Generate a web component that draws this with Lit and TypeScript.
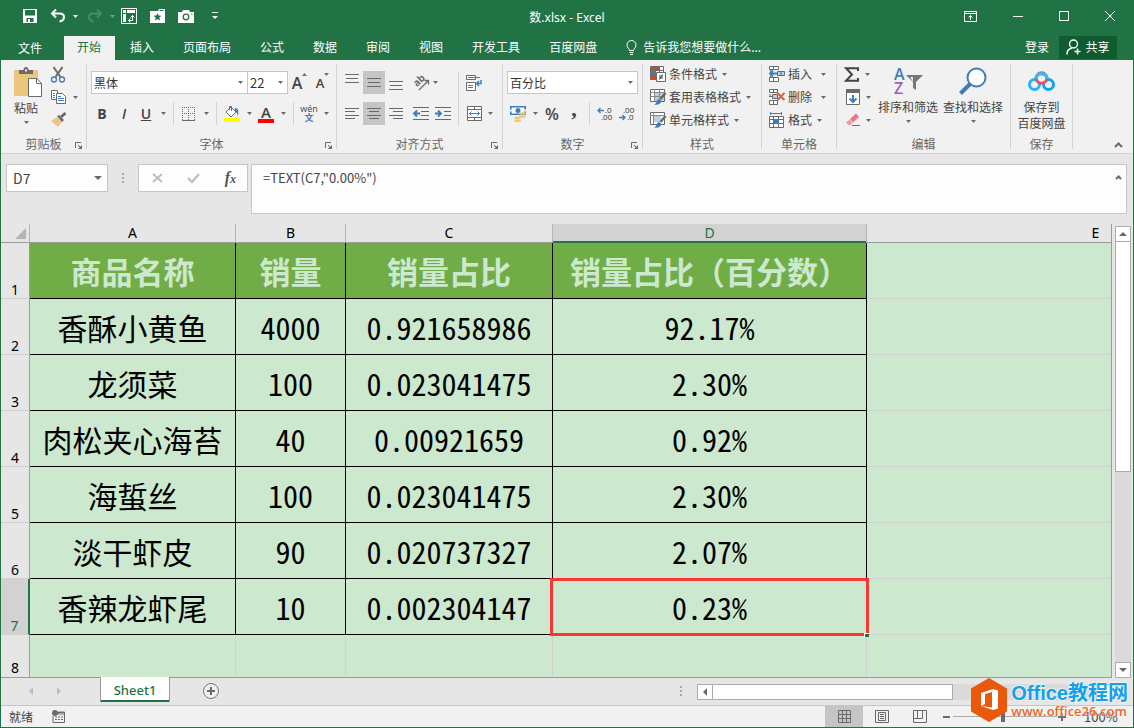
import { LitElement, html, css, svg, nothing } from "lit";
import { customElement, state } from "lit/decorators.js";
import { classMap } from "lit/directives/class-map.js";

const GRAY = "#6a6a6a";
const BLUE = "#3f7cb8";

/* Wraps drawing commands in an svg of the given size */
const icon = (w: number, h: number, body: unknown) =>
  html`<svg width=${w} height=${h} viewBox="0 0 ${w} ${h}" fill="none" aria-hidden="true">${body}</svg>`;

const caret = () => icon(5, 3, svg`<path d="M0 0h5L2.500 3z" fill="#6a6a6a"/>`);
const caretWhite = () => icon(5, 3, svg`<path d="M0 0h5L2.500 3z" fill="#fff"/>`);

const hLines = (lines: number[][]) =>
  svg`${lines.map(([x, y, w]) => svg`<rect x=${x} y=${y} width=${w} height="1" fill=${GRAY}/>`)}`;

const icons = {
  save: icon(14, 14, svg`<path d="M0 0h14v14H0z" fill="#fff"/><path d="M2 1h10v5.500H2zM3.500 9h7v4h-7z" fill="#217346"/><path d="M5 10h2v3H5z" fill="#fff"/>`),
  undo: icon(16, 14, svg`<path d="M2 4.500h7.500c3 0 4.500 1.500 4.500 3.500s-1.500 4-4.500 4.500" stroke="#fff" stroke-width="2"/><path d="M6 .5 2 4.500l4 4" stroke="#fff" stroke-width="2"/>`),
  redo: icon(16, 14, svg`<path d="M14 4.500H6.500c-3 0-4.500 1.500-4.500 3.500s1.500 4 4.500 4.500" stroke="#4f8f6c" stroke-width="2"/><path d="m10 .5 4 4-4 4" stroke="#4f8f6c" stroke-width="2"/>`),
  pivot: icon(16, 16, svg`<path d="M.5.500h15v15H.5z" stroke="#fff"/><path d="M2 2h3v3H2zM6 2h8v3H6zM2 6h3v8H2z" fill="#fff"/><path d="M7.500 12.500h4v-5M9.500 9.500l2-2 2 2M9.500 10.500l-2 2 2 2" stroke="#fff"/>`),
  folder: icon(15, 14, svg`<path d="M0 2h8l1-2h6v14H0z" fill="#fff"/><path d="M9.500 1.500h4" stroke="#217346"/><path d="m7.500 4 1.100 2.600 2.900.2-2.200 1.800.8 2.900-2.600-1.600L5 11.500l.7-2.900-2.200-1.800 2.900-.2z" fill="#217346"/>`),
  camera: icon(16, 13, svg`<path d="M0 2h4l1-2h6l1 2h4v11H0z" fill="#fff"/><circle cx="8" cy="7" r="2.800" stroke="#217346" stroke-width="1.300"/><path d="M13 4h1.500" stroke="#217346"/>`),
  custom: icon(6, 8, svg`<path d="M0 .5h6" stroke="#fff"/><path d="M0 4h6L3 7z" fill="#fff"/>`),
  ribbonOpt: icon(13, 11, svg`<path d="M.5.500h12v10H.5zM.5 2.500h12M6.500 9V4.500M4.500 6.500l2-2 2 2" stroke="#fff"/>`),
  min: icon(10, 10, svg`<path d="M0 5.500h10" stroke="#fff"/>`),
  max: icon(10, 10, svg`<path d="M.5.500h9v9h-9z" stroke="#fff"/>`),
  close: icon(10, 10, svg`<path d="m0 0 10 10M10 0 0 10" stroke="#fff"/>`),
  bulb: icon(11, 15, svg`<path d="M3.500 10.500c0-2-2.500-2.500-2.500-5.500a4.500 4.500 0 0 1 9 0c0 3-2.500 3.500-2.500 5.500zM3.500 12.500h4M4 14.500h3" stroke="#fff"/>`),
  share: icon(16, 16, svg`<circle cx="7.500" cy="5" r="4" stroke="#fff" stroke-width="1.400"/><path d="M1 15.500c0-4 2-6 5-6.300M8.500 12.500h6M11.500 9.500v6" stroke="#fff" stroke-width="1.400"/>`),
  paste: icon(28, 31, svg`<path d="M0 3h24v26H0z" fill="#ecc67f"/><path d="M5 3h4.500c0-4 5-4 5 0H19v4H5z" fill="#6a6a6a"/><path d="M11 2.500h2v2h-2z" fill="#f1f1f1"/><path d="M14.500 11.500h8.500l4.500 5v13h-13z" fill="#fff" stroke="#6a6a6a"/><path d="M22.500 11.500v5h5" stroke="#6a6a6a"/>`),
  cut: icon(14, 16, svg`<path d="m2.500 0 7 10M11.500 0l-7 10" stroke="#6a6a6a" stroke-width="2"/><circle cx="3" cy="12.500" r="2.500" stroke="${BLUE}" stroke-width="1.300"/><circle cx="11" cy="12.500" r="2.500" stroke="${BLUE}" stroke-width="1.300"/>`),
  copy: icon(15, 14, svg`<path d="M.5.500h6v9h-6z" fill="#fff" stroke="#6a6a6a"/><path d="M5.500 3.500h6l3 3v7h-9z" fill="#fff" stroke="#6a6a6a"/><path d="M2 3.500h2M2 5.500h2M2 7.500h2M7 6.500h3M7 8.500h6M7 10.500h6" stroke="${BLUE}"/>`),
  brush: icon(16, 15, svg`<path d="m0 9 6-4 5 5-4 5z" fill="#ecc67f"/><path d="m6 4 2-1 5 5-2 2z" fill="#6a6a6a"/><path d="m10 5 4.500-4" stroke="#6a6a6a" stroke-width="3"/>`),
  launcher: icon(7, 7, svg`<path d="M.5 6V.500H6M3 3l3 3" stroke="#6a6a6a"/><path d="M7 3v4H3z" fill="#6a6a6a"/>`),
  up: icon(5, 3, svg`<path d="M0 3h5L2.500 0z" fill="${BLUE}"/>`),
  down: icon(5, 3, svg`<path d="M0 0h5L2.500 3z" fill="${BLUE}"/>`),
  borders: icon(14, 14, svg`<path d="M0 .5h14M0 6.500h14M.5 0v13M6.500 0v13M12.500 0v13" stroke="#6a6a6a" stroke-dasharray="1 1"/><path d="M0 13.500h13" stroke="#6a6a6a"/>`),
  fill: icon(16, 17, svg`<path d="m2 7 5-5 5 5-5 5z" fill="#fff" stroke="#6a6a6a"/><path d="M5.500 5V1.500h2V6" stroke="#6a6a6a"/><path d="M11 3c3 0 4 3 3 8-1-2-1-4-3-5z" fill="${BLUE}"/><path d="M0 13h16v4H0z" fill="#ff0"/>`),
  threeLines: icon(14, 9, hLines([[0, 0, 14], [1, 4, 12], [0, 8, 14]])),
  left: icon(14, 11, hLines([[0, 0, 14], [0, 3, 10], [0, 7, 14], [0, 10, 10]])),
  center: icon(14, 11, hLines([[0, 0, 14], [2, 3, 10], [0, 7, 14], [2, 10, 10]])),
  right: icon(14, 11, hLines([[0, 0, 14], [4, 3, 10], [0, 7, 14], [4, 10, 10]])),
  orient: icon(16, 16, svg`<text x="0" y="9" transform="rotate(-45 6 6)" font-family="Open Sans" font-weight="700" font-size="10" fill="#6a6a6a">ab</text><path d="m6 15 9-9M11.500 5.500h4v4" stroke="#6a6a6a" stroke-width="1.300"/>`),
  outdent: icon(16, 13, svg`<path d="M0 .5h16M8 4.500h8M8 8.500h8M0 12.500h16" stroke="#6a6a6a"/><path d="M1 6.500h6M4 3.500l-3 3 3 3" stroke="${BLUE}" stroke-width="1.800"/>`),
  indent: icon(16, 13, svg`<path d="M0 .5h16M9 4.500h7M9 8.500h7M0 12.500h16" stroke="#6a6a6a"/><path d="M0 6.500h6M3 3.500l3 3-3 3" stroke="${BLUE}" stroke-width="1.800"/>`),
  wrap: icon(16, 16, svg`<path d="M.5.500h9v4h-9zM.5 7.500h9v8h-9z" fill="#fff" stroke="#6a6a6a"/><path d="M2 2.500h12M2 10.500h5M2 12.500h5" stroke="${BLUE}"/><path d="M15 5v3.500h-4M13 6l-2.500 2.500L13 11" stroke="${BLUE}" stroke-width="1.500"/>`),
  merge: icon(15, 15, svg`<path d="M.5.500h14v14H.5zM.5 3.500h14M.5 11.500h14M7.500.500v3M7.500 11.500v3" fill="#fff" stroke="#6a6a6a"/><path d="M2 7.500h11M4.500 5.500l-2 2 2 2M10.500 5.500l2 2-2 2" stroke="${BLUE}"/>`),
  currency: icon(16, 16, svg`<path d="M.8.800h14.400v7.500H.8z" fill="#fff" stroke="${BLUE}" stroke-width="1.600"/><circle cx="8" cy="4.500" r="2.500" fill="${BLUE}"/><path d="M0 4.500h2M14 4.500h2" stroke="#f1f1f1" stroke-width="2"/><ellipse cx="12.500" cy="7.500" rx="3.500" ry="1.300" fill="#ecc67f"/><ellipse cx="12.500" cy="10.500" rx="3.500" ry="1.300" fill="#ecc67f"/><ellipse cx="7.500" cy="11.800" rx="3.500" ry="1.300" fill="#ecc67f"/><ellipse cx="7.500" cy="14.700" rx="3.500" ry="1.300" fill="#ecc67f"/>`),
  decInc: icon(16, 14, svg`<path d="M1 3.500h6M3.500 1l-2.500 2.500L3.500 6" stroke="${BLUE}" stroke-width="1.300"/><text x="8" y="6" font-family="Open Sans" font-size="8" fill="#333">.0</text><text x="4" y="13" font-family="Open Sans" font-size="8" fill="#333">.00</text>`),
  decDec: icon(16, 14, svg`<path d="M0 10.500h6M3.500 8 6 10.500 3.500 13" stroke="${BLUE}" stroke-width="1.300"/><text x="4" y="6" font-family="Open Sans" font-size="8" fill="#333">.00</text><text x="8" y="13" font-family="Open Sans" font-size="8" fill="#333">.0</text>`),
  cond: icon(16, 16, svg`<path d="M.5.500h13v13H.5zM.5 4.500h13M.5 8.500h13M5.500.500v13M9.500.500v13" fill="#fff" stroke="#6a6a6a"/><path d="M1 1h8v3H1zM1 9h4v4H1z" fill="#d24726"/><path d="M1 5h5v3H1z" fill="${BLUE}"/><path d="M6.500 6.500h9v9h-9z" fill="#fff" stroke="#6a6a6a"/><path d="M9 10h4M9 12h4M12.500 8.500l-3 5" stroke="#444"/>`),
  tableFmt: icon(16, 16, svg`<path d="M.5.500h14v12H.5z" fill="#fff" stroke="#6a6a6a"/><path d="M5 4h9v8H5z" fill="#b9cfe6"/><path d="M.5 3.500h14M.5 7.500h14M4.500.500v12M9.500.500v12" stroke="#8a8a8a"/><path d="m15.500 4-5 6" stroke="#6a6a6a" stroke-width="2.500"/><path d="M4 15.500c3-.5 2-5 5-5.500l2.500 2c-.5 3-4 4.500-7.500 3.500z" fill="${BLUE}"/>`),
  cellStyle: icon(16, 16, svg`<path d="M.5.500h14v12H.5z" fill="#fff" stroke="#6a6a6a"/><path d="M4 4h7v6H4z" fill="#b9cfe6"/><path d="M.5 3.500h14M3.500.500v12" stroke="#8a8a8a"/><path d="m15.500 4-5 6" stroke="#6a6a6a" stroke-width="2.500"/><path d="M4 15.500c3-.5 2-5 5-5.500l2.500 2c-.5 3-4 4.500-7.500 3.500z" fill="${BLUE}"/>`),
  insert: icon(16, 16, svg`<path d="M.5.500h9v3h-9zM.5 11.500h9v4h-9zM4.500.500v3M4.500 11.500v4M1.500 3.500v2M1.500 9.500v2" fill="#fff" stroke="#6a6a6a"/><path d="M8.500 5.500h7v4h-7zM12 5.500v4" fill="#b9cfe6" stroke="#6a6a6a"/><path d="M1 7.500h7M4 4.500l-3 3 3 3" stroke="${BLUE}" stroke-width="1.800"/>`),
  remove: icon(16, 16, svg`<path d="M.5.500h8v3h-8zM.5 11.500h8v4h-8zM4.500.500v3M4.500 11.500v4" fill="#fff" stroke="#6a6a6a"/><path d="M3.500 5.500h5v4h-5z" fill="#b9cfe6" stroke="#6a6a6a"/><path d="M1 5v2M0 7.500h3" stroke="#6a6a6a"/><path d="m8.500 4 7 7M15.500 4l-7 7" stroke="#d9593d" stroke-width="1.800"/>`),
  format: icon(16, 16, svg`<path d="M1 1.500h12M1.500 0v3M12.500 0v3" stroke="${BLUE}"/><path d="M.5 4.500h14v11H.5zM.5 7.500h14M.5 11.500h14M4.500 4.500v11M9.500 4.500v11" fill="#fff" stroke="#6a6a6a"/><path d="M4 7h6v5H4z" fill="${BLUE}"/>`),
  sigma: icon(15, 15, svg`<path d="M14 4V1.200H2L8 7.500 2 13.800h12V11" stroke="#444" stroke-width="2"/>`),
  fillDown: icon(14, 16, svg`<path d="M.5.500h13v15H.5z" fill="#fff" stroke="#6a6a6a"/><path d="M0 0h14v4H0z" fill="#6a6a6a"/><path d="M7 6v7M3.500 9.500 7 13l3.500-3.500" stroke="${BLUE}" stroke-width="2"/>`),
  eraser: icon(14, 14, svg`<path d="m4 6 6-5.500 3 3.500-6 5.500z" fill="#e8788a"/><path d="m3.500 6.500 3.200 3.500-2.500 2H2.500L0 9.500z" fill="#ee9aa7"/><path d="M6 12.500h8" stroke="#6a6a6a"/>`),
  sort: icon(29, 29, svg`<text x="0" y="13" font-family="Open Sans" font-weight="600" font-size="16" fill="${BLUE}">A</text><text x="0" y="27" font-family="Open Sans" font-weight="600" font-size="16" fill="#9a5fc0">Z</text><path d="M12 8h17l-7 7v8l-3-2v-6z" fill="#777"/><path d="M16 10h3v5z" fill="#e8e8e8"/>`),
  find: icon(28, 28, svg`<circle cx="17.500" cy="10.500" r="9" fill="#fff" stroke="${BLUE}" stroke-width="2"/><path d="m11 17-9.500 9.500" stroke="${BLUE}" stroke-width="4"/>`),
  baidu: icon(27, 22, svg`<circle cx="6.500" cy="14.500" r="5" stroke="#25b4f4" stroke-width="3"/><circle cx="20.500" cy="14.500" r="5" stroke="#12a0f5" stroke-width="3"/><circle cx="13.500" cy="8" r="5.300" fill="#f1f1f1" stroke="#f04c62" stroke-width="3"/><path d="M7.700 8.500a5.900 5.900 0 0 1 11.600 0" stroke="#34bdf5" stroke-width="3.400"/>`),
  chevron: icon(9, 6, svg`<path d="m1 5 3.500-3.500L8 5" stroke="#6a6a6a" stroke-width="2"/>`),
  chevronS: icon(7, 5, svg`<path d="m1 4 2.500-2.500L6 4" stroke="#6a6a6a" stroke-width="2"/>`),
  cancel: icon(11, 10, svg`<path d="m1 1 9 8M10 1 1 9" stroke="#bdbdbd" stroke-width="1.800"/>`),
  check: icon(13, 10, svg`<path d="m1 5 4 4 7-8" stroke="#bdbdbd" stroke-width="2.200"/>`),
  dots: icon(2, 11, svg`<path d="M0 0h2v2H0zM0 4h2v2H0zM0 8h2v2H0z" fill="#aaa"/>`),
  plus: icon(16, 16, svg`<circle cx="8" cy="8" r="7.500" fill="#f1f1f1" stroke="#777"/><path d="M8 4v8M4 8h8" stroke="#6a6a6a" stroke-width="2"/>`),
  macro: icon(13, 13, svg`<path d="M1 6v6.500h11.500v-10H7M6.500 2h6v2h-6z" stroke="#6a6a6a"/><circle cx="3" cy="3" r="3" fill="#6a6a6a"/><path d="M3 7h2M6 7h2M9 7h2M3 9.500h2M6 9.500h2M9 9.500h2" stroke="#6a6a6a"/>`),
  viewGrid: icon(13, 13, svg`<path d="M.5.500h12v12H.5zM.5 4.500h12M.5 8.500h12M4.500.500v12M8.500.500v12" stroke="#6a6a6a"/>`),
  viewPage: icon(14, 13, svg`<path d="M.5.500h13v12H.5zM3.500 2.500h7v8h-7zM5 4.500h4M5 6.500h4M5 8.500h4" stroke="#6a6a6a"/>`),
  viewBreak: icon(14, 13, svg`<path d="M.5.500h13v12H.5zM4.500.500v8M9.500.500v8M.5 8.500h9" stroke="#6a6a6a"/>`),
  hex: icon(38, 44, svg`<path d="M19 1 36 11v22L19 43 2 33V11z" fill="#e8590c" stroke="#e8590c" stroke-width="2" stroke-linejoin="round"/><path d="m11 15 12-4 5 1.500v18L23 32l-12-4 11 1.500V14l-7 2v10l-4 2z" fill="#fff"/>`),
};

interface Row { n: number; cells: string[] }

const TABS = ["插入", "页面布局", "公式", "数据", "审阅", "视图", "开发工具", "百度网盘"];
const HEAD = ["商品名称", "销量", "销量占比", "销量占比（百分数）"];
const ROWS: Row[] = [
  { n: 2, cells: ["香酥小黄鱼", "4000", "0.921658986", "92.17%"] },
  { n: 3, cells: ["龙须菜", "100", "0.023041475", "2.30%"] },
  { n: 4, cells: ["肉松夹心海苔", "40", "0.00921659", "0.92%"] },
  { n: 5, cells: ["海蜇丝", "100", "0.023041475", "2.30%"] },
  { n: 6, cells: ["淡干虾皮", "90", "0.020737327", "2.07%"] },
  { n: 7, cells: ["香辣龙虾尾", "10", "0.002304147", "0.23%"] },
];

@customElement("app-root")
export class AppRoot extends LitElement {
  @state() private selectedRow = 7;

  static styles = css`
    :host {
      display: flex;
      flex-direction: column;
      height: 100vh;
      box-sizing: border-box;
      border: solid #217346;
      border-width: 0 1px 1px;
      background: #e6e6e6;
      overflow: hidden;
      position: relative;
      font: 12px/16px "Noto Sans CJK SC", sans-serif;
      color: #444;
    }
    * { box-sizing: border-box; }
    svg { display: block; flex: none; overflow: visible; }
    button, select, input, textarea {
      font: inherit; color: inherit; margin: 0; padding: 0; border: 0; background: none; border-radius: 0;
    }
    button { display: flex; align-items: center; justify-content: center; white-space: nowrap; flex: none; }
    select, input { appearance: none; outline: none; min-width: 0; }

    .title { background: #217346; color: #fff; height: 36px; flex: none; display: grid; grid-template-columns: 1fr auto 1fr; align-items: center; font-family: "Noto Sans", "Noto Sans CJK SC", sans-serif; }
    .quick { display: flex; align-items: center; padding: 0 0 4px 22px; }
    .quick button { height: 16px; }
    .q-save { margin-right: 13px; }
    .q-drop { gap: 7px; margin-right: 9px; }
    .q-redo { margin-right: 6px; opacity: 0.9; }
    .q-mid { margin-right: 13px; }
    .q-cam { margin-right: 18px; }
    .dim { opacity: 0.4; }
    .win { display: flex; justify-content: flex-end; gap: 36px; padding: 0 18px 4px 0; }

    .tabs { background: #217346; color: #fff; height: 24px; flex: none; display: flex; align-items: stretch; }
    .tabs button { padding: 0 14px 2px 15px; }
    .tabs .file { padding: 0 22px 0 17px; }
    .tabs .on { background: #f1f1f1; color: #217346; padding: 0 14px 2px 13px; width: 51px; }
    .tabs .tell { gap: 6px; }
    .tabs .login { margin-left: auto; padding: 0 10px 2px; }
    .tabs .share { background: #0f5c30; gap: 4px; padding: 0 8px 1px 7px; width: 58px; height: 23px; margin-right: 16px; }

    .ribbon { display: flex; height: 94px; flex: none; background: #f1f1f1; border-bottom: 1px solid #d2d2d2; padding-top: 4px; }
    .group { display: flex; flex-direction: column; flex: none; padding-right: 1px; background: linear-gradient(#d4d4d4, #d4d4d4) right top / 1px 85px no-repeat; }
    .body { display: flex; height: 72px; }
    .cap { height: 16px; display: grid; grid-template-columns: 1fr auto 1fr; align-items: center; color: #666; }
    .cap .lau { grid-column: 3; justify-self: end; margin-right: 4px; padding-top: 3px; }
    .cap span { grid-column: 2; }
    .rows { display: flex; flex-direction: column; gap: 8px; padding-top: 7px; }
    .line { display: flex; align-items: center; height: 23px; }
    .sep { width: 1px; height: 23px; background: #d4d4d4; flex: none; margin: 0 4px; }
    .sep.tall { height: 55px; margin: 7px 0 0 7px; }
    .big { flex-direction: column; justify-content: flex-start; }
    .big .pic { height: 32px; display: flex; align-items: center; margin-bottom: 4px; }
    .big .lbl { height: 16px; margin-bottom: 5px; }
    .g-clip { width: 86px; }
    .g-clip .body { padding: 3px 0 0 13px; }
    .g-clip .big .pic { height: 31px; margin-bottom: 2px; }
    .g-clip .big { width: 28px; align-items: flex-start; }
    .g-clip .big .arr { margin-left: 10px; }
    .small { display: flex; flex-direction: column; gap: 6px; padding-left: 9px; }
    .small button { height: 16px; gap: 7px; justify-content: flex-start; }
    .g-font { width: 250px; }
    .g-font .rows { padding-left: 4px; }
    .combo { display: grid; height: 23px; background: #fff; border: 1px solid #c6c6c6; flex: none; }
    .combo > * { grid-area: 1 / 1; }
    .combo select { padding-left: 2px; width: 100%; font-size: 12px; color: #333; }
    .combo svg { justify-self: end; align-self: center; margin-right: 4px; pointer-events: none; }
    .w-font { width: 157px; }
    .w-size { width: 41px; margin-left: -1px; }
    .w-size select { font-size: 13px; }
    .w-num { width: 131px; }
    .grow { width: 23px; align-items: flex-start; font: 600 16px/20px "Open Sans", sans-serif; }
    .grow.s { font-size: 13px; }
    .b22 { width: 22px; height: 23px; }
    .b16 { width: 16px; height: 23px; }
    .b12 { width: 12px; height: 23px; }
    .lead { padding-left: 6px; }
    .bold { font: 700 14px/20px "Open Sans", sans-serif; }
    .ital { font: italic 600 14px/20px "Open Sans", sans-serif; }
    .und { font: 600 14px/20px "Open Sans", sans-serif; text-decoration: underline; }
    .color-a { flex-direction: column; font: 600 15px/14px "Open Sans", sans-serif; }
    .bar { width: 16px; height: 4px; background: red; }
    .wen { flex-direction: column; font: 9px/8px "Open Sans", sans-serif; }
    .wen b { color: #3f7cb8; font: 700 9px/10px "Noto Sans CJK SC", sans-serif; }
    .sel { background: #c5c5c5; }
    .g-align { width: 166px; }
    .g-align .rows { padding-left: 4px; }
    .g-align .first { align-items: flex-start; padding-top: 3px; }
    .g-align .last { align-items: flex-end; padding-bottom: 4px; }
    .g-align .side { padding-left: 7px; }
    .side .line { gap: 6px; }
    .g-num { width: 140px; }
    .g-num .rows { padding-left: 4px; }
    .pct { font: 600 16px/20px "Open Sans", sans-serif; }
    .comma { font: 700 22px/12px "Liberation Serif", serif; padding-bottom: 10px; }
    .g-style { width: 119px; }
    .list { display: flex; flex-direction: column; gap: 7px; padding: 2px 0 0 7px; }
    .list button { height: 16px; gap: 5px; justify-content: flex-start; }
    .list svg:first-child { margin-right: -2px; }
    .g-cell { width: 75px; }
    .list .wide { gap: 9px; }
    .list .wide svg:first-child { margin-right: -6px; }
    .g-edit { width: 174px; }
    .g-edit .list { width: 41px; }
    .g-edit .list button { gap: 8px; }
    .g-edit .list button + button { padding-left: 2px; }
    .g-edit .big { width: 60px; margin-right: 5px; }
    .g-edit .big .pic, .g-save .pic { margin-top: 2px; height: 30px; margin-bottom: 3px; }
    .g-save { width: 62px; }
    .g-save .big { width: 61px; }
    .g-save .lbl { margin: 0; }
    .collapse { margin: auto 10px 2px auto; height: 12px; }

    .fx { display: flex; align-items: flex-start; padding: 10px 6px 10px 5px; flex: none; height: 70px; }
    .box { background: #fdfdfd; border: 1px solid #c6c6c6; }
    .name { width: 102px; height: 28px; display: flex; align-items: center; padding: 0 5px 0 6px; font-size: 14px; }
    .name input { flex: 1; }
    .fx .dots { width: 30px; height: 28px; display: flex; align-items: center; justify-content: center; }
    .fxb { width: 110px; height: 28px; display: flex; align-items: center; justify-content: space-between; padding: 0 11px 0 13px; margin-right: 3px; }
    .fxb i { font: italic 700 16px/20px "Liberation Serif", serif; color: #555; }
    .fxb small { font-size: 12px; }
    .formula { flex: 1; height: 50px; display: flex; align-items: flex-start; padding: 4px 4px 0 11px; }
    .formula textarea { flex: 1; height: 40px; resize: none; outline: none; font-size: 13px; line-height: 18px; overflow: hidden; }
    .formula button { margin-top: 6px; }

    .main { flex: 1; min-height: 0; display: flex; }
    .sheet { flex: 1; min-width: 0; overflow: hidden; background: #cce8cf; border: solid #9b9b9b; border-width: 0 1px 1px 0; }
    table { border-collapse: separate; border-spacing: 0; table-layout: fixed; width: 1324px; }
    .c0 { width: 29px; } .c1 { width: 206px; } .c2 { width: 110px; } .c3 { width: 207px; } .c4 { width: 314px; } .c5 { width: 458px; }
    th, td { padding: 0; border: solid #d0d0d0; border-width: 0 1px 1px 0; text-align: center; font-weight: 400; }
    thead th { height: 19px; background: #e6e6e6; color: #000; font: 14px/18px "Noto Sans", sans-serif; border-bottom-color: #9b9b9b; border-right-color: #b4b4b4; }
    thead .on { background: #d2d2d2; color: #217346; border-bottom: 0; box-shadow: inset 0 -2px #217346; padding-bottom: 1px; }
    thead .corner svg { margin: 3px 3px 2px auto; }
    tbody th { background: #e6e6e6; color: #000; font: 14px/16px "Noto Sans", sans-serif; vertical-align: bottom; border-right-color: #9b9b9b; }
    tbody tr { height: 56px; }
    tbody tr.tail { height: 43px; }
    .tail td, .tail th { border-bottom: 0; }
    .tail th { padding-bottom: 2px; }
    tbody th.on { background: #d2d2d2; color: #217346; border-right: 2px solid #217346; }
    .d { border-color: #000; font-size: 30px; line-height: 40px; color: #000; font-feature-settings: "hwid"; padding-top: 1px; white-space: nowrap; }
    .h { background: #70ad47; color: #cce8cf; font-size: 31px; font-weight: 700; font-feature-settings: normal; }
    .cur { position: relative; }
    .ring { position: absolute; inset: -1px -3px -2px; border: 3px solid #fb3532; }
    .knob { position: absolute; right: -3px; bottom: -3px; width: 5px; height: 4px; background: #217346; border: solid #fff; border-width: 1px 0 0 1px; }

    .vs { width: 16px; margin: 2px 2px 0 3px; display: flex; flex-direction: column; background: #dadada; }
    .sb { width: 16px; height: 16px; background: #fff; border: 1px solid #ababab; }
    .vthumb { height: 231px; background: #fff; border: 1px solid #ababab; margin: -1px 0 auto; }

    .foot { height: 28px; flex: none; display: flex; align-items: flex-start; border-bottom: 1px solid #c6c6c6; }
    .nav { display: flex; gap: 24px; padding: 9px 38px 0 27px; }
    .sheet-tab { background: #fff; color: #217346; width: 70px; height: 25px; margin-top: -1px; border: solid #9b9b9b; border-width: 0 1px; box-shadow: inset 0 -2px #217346; font: 500 13px/20px "Noto Sans", sans-serif; }
    .add { margin: 5px auto 0 33px; }
    .foot .fd { padding: 8px 15px 0 0; }
    .hs { display: flex; width: 415px; background: #dadada; height: 16px; margin: 6px 21px 0 0; }
    .hthumb { width: 241px; margin: 0 auto 0 -1px; background: #fff; border: 1px solid #ababab; }

    .status { height: 21px; flex: none; background: #f1f1f1; display: flex; align-items: center; padding-left: 8px; }
    .status .macro { margin: 0 auto 0 19px; }
    .status .v { width: 38px; height: 21px; }
    .zoom { display: flex; align-items: center; padding-left: 4px; width: 145px; flex: none; }
    .zoom b { width: 7px; height: 2px; background: #6a6a6a; }
    .zoom input { width: 104px; height: 11px; margin: 0 1px 0 3px; background: linear-gradient(#aaa, #aaa) 0 5px / 100% 1px no-repeat; }
    .zoom input::-webkit-slider-thumb { appearance: none; width: 4px; height: 11px; background: #6a6a6a; }
    .pc { width: 49px; justify-content: flex-start; font-size: 13px; }

    .mark { position: absolute; right: 5px; bottom: 5px; display: flex; align-items: center; gap: 3px; }
    .mark p { margin: 0; font: 700 20px/22px "Liberation Sans", "Noto Sans CJK SC", sans-serif; color: #12a1ea; text-shadow: 0 0 2px #fff, 0 0 2px #fff; white-space: nowrap; }
    .mark a { display: block; font: 600 13px/14px "Open Sans", sans-serif; color: #f0661e; text-decoration: none; text-shadow: 0 0 2px #fff; }
  `;

  private launcher() {
    return html`<button class="lau" aria-label="更多选项">${icons.launcher}</button>`;
  }

  private iconBtn(label: string, pic: unknown, cls = "b22") {
    return html`<button class=${cls} aria-label=${label}>${pic}</button>`;
  }

  private listBtn(pic: unknown, label: string, cls = "") {
    return html`<button class=${cls} aria-label=${label}>${pic}${label}${caret()}</button>`;
  }

  private drop() {
    return this.iconBtn("展开", caret(), "b12");
  }

  private ribbon() {
    return html`<section class="ribbon" aria-label="功能区">
      <div class="group g-clip">
        <div class="body">
          <button class="big"><span class="pic">${icons.paste}</span><span class="lbl">粘贴</span><span class="arr">${caret()}</span></button>
          <div class="small">
            <button aria-label="剪切">${icons.cut}</button>
            <button aria-label="复制">${icons.copy}${caret()}</button>
            <button aria-label="格式刷">${icons.brush}</button>
          </div>
        </div>
        <div class="cap"><span>剪贴板</span>${this.launcher()}</div>
      </div>
      <div class="group g-font">
        <div class="body rows">
          <div class="line">
            <span class="combo w-font"><select aria-label="字体"><option>黑体</option></select>${caret()}</span>
            <span class="combo w-size"><select aria-label="字号"><option>22</option></select>${caret()}</span>
            <button class="grow" aria-label="增大字号">A${icons.up}</button>
            <button class="grow s" aria-label="减小字号">A${icons.down}</button>
          </div>
          <div class="line">
            <button class="b22 bold">B</button><button class="b22 ital">I</button><button class="b22 und">U</button>
            ${this.drop()}<i class="sep"></i>${this.iconBtn("边框", icons.borders)}${this.drop()}<i class="sep"></i>
            ${this.iconBtn("填充颜色", icons.fill)}${this.drop()}
            <button class="b22 color-a">A<span class="bar"></span></button>${this.drop()}<i class="sep"></i>
            <button class="b22 wen">wén<b>文</b></button>${this.drop()}
          </div>
        </div>
        <div class="cap"><span>字体</span>${this.launcher()}</div>
      </div>
      <div class="group g-align">
        <div class="body">
          <div class="rows">
            <div class="line">
              ${this.iconBtn("顶端对齐", icons.threeLines, "b22 first")}${this.iconBtn("垂直居中", icons.threeLines, "b22 sel")}${this.iconBtn("底端对齐", icons.threeLines, "b22 last")}
              ${this.iconBtn("方向", icons.orient, "b22 lead")}${this.drop()}
            </div>
            <div class="line">
              ${this.iconBtn("左对齐", icons.left)}${this.iconBtn("居中", icons.center, "b22 sel")}${this.iconBtn("右对齐", icons.right)}
              ${this.iconBtn("减少缩进", icons.outdent, "b22 lead")}${this.iconBtn("增加缩进", icons.indent, "b22 lead")}
            </div>
          </div>
          <i class="sep tall"></i>
          <div class="rows side">
            <div class="line">${this.iconBtn("自动换行", icons.wrap, "b16")}</div>
            <div class="line">${this.iconBtn("合并后居中", icons.merge, "b16")}${caret()}</div>
          </div>
        </div>
        <div class="cap"><span>对齐方式</span>${this.launcher()}</div>
      </div>
      <div class="group g-num">
        <div class="body rows">
          <div class="line"><span class="combo w-num"><select aria-label="数字格式"><option>百分比</option></select>${caret()}</span></div>
          <div class="line">
            ${this.iconBtn("会计数字格式", icons.currency)}${this.drop()}
            <button class="b22 pct">%</button><button class="b22 comma">,</button><i class="sep"></i>
            ${this.iconBtn("增加小数位数", icons.decInc)}${this.iconBtn("减少小数位数", icons.decDec)}
          </div>
        </div>
        <div class="cap"><span>数字</span>${this.launcher()}</div>
      </div>
      <div class="group g-style">
        <div class="body list">
          ${this.listBtn(icons.cond, "条件格式")}${this.listBtn(icons.tableFmt, "套用表格格式")}${this.listBtn(icons.cellStyle, "单元格样式")}
        </div>
        <div class="cap"><span>样式</span></div>
      </div>
      <div class="group g-cell">
        <div class="body list">
          ${this.listBtn(icons.insert, "插入", "wide")}${this.listBtn(icons.remove, "删除", "wide")}${this.listBtn(icons.format, "格式")}
        </div>
        <div class="cap"><span>单元格</span></div>
      </div>
      <div class="group g-edit">
        <div class="body">
          <div class="list">
            <button aria-label="自动求和">${icons.sigma}${caret()}</button>
            <button aria-label="填充">${icons.fillDown}${caret()}</button>
            <button aria-label="清除">${icons.eraser}${caret()}</button>
          </div>
          <button class="big"><span class="pic">${icons.sort}</span><span class="lbl">排序和筛选</span>${caret()}</button>
          <button class="big"><span class="pic">${icons.find}</span><span class="lbl">查找和选择</span>${caret()}</button>
        </div>
        <div class="cap"><span>编辑</span></div>
      </div>
      <div class="group g-save">
        <div class="body">
          <button class="big"><span class="pic">${icons.baidu}</span><span class="lbl">保存到</span><span class="lbl">百度网盘</span></button>
        </div>
        <div class="cap"><span>保存</span></div>
      </div>
      <button class="collapse" aria-label="折叠功能区">${icons.chevron}</button>
    </section>`;
  }

  private cell(row: Row, text: string, col: number) {
    const current = row.n === this.selectedRow && col === 3;
    return html`<td class=${classMap({ d: true, cur: current })}>${text}${current
      ? html`<span class="ring"></span><span class="knob"></span>`
      : nothing}</td>`;
  }

  private grid() {
    return html`<div class="sheet"><table>
      <colgroup><col class="c0"><col class="c1"><col class="c2"><col class="c3"><col class="c4"><col class="c5"></colgroup>
      <thead><tr>
        <th class="corner" aria-label="全选">${icon(11, 11, svg`<path d="M11 0v11H0z" fill="#b4b4b4"/>`)}</th>
        <th>A</th><th>B</th><th>C</th><th class="on">D</th><th>E</th>
      </tr></thead>
      <tbody>
        <tr><th>1</th>${HEAD.map((t) => html`<td class="d h">${t}</td>`)}<td></td></tr>
        ${ROWS.map((r) => html`<tr><th class=${classMap({ on: r.n === this.selectedRow })}>${r.n}</th>${r.cells.map((t, i) => this.cell(r, t, i))}<td></td></tr>`)}
        <tr class="tail"><th>8</th><td></td><td></td><td></td><td></td><td></td></tr>
      </tbody>
    </table></div>`;
  }

  render() {
    const tri = (d: string, w: number, h: number, c = "#6a6a6a") => icon(w, h, svg`<path d=${d} fill=${c}/>`);
    return html`
      <header class="title">
        <div class="quick">
          <button class="q-save" aria-label="保存">${icons.save}</button>
          <button class="q-drop" aria-label="撤消">${icons.undo}${caretWhite()}</button>
          <button class="q-drop q-redo" aria-label="恢复" disabled>${icons.redo}<span class="dim">${caretWhite()}</span></button>
          <button class="q-mid" aria-label="数据透视表">${icons.pivot}</button>
          <button class="q-mid" aria-label="打开">${icons.folder}</button>
          <button class="q-cam" aria-label="照相机">${icons.camera}</button>
          <button aria-label="自定义快速访问工具栏">${icons.custom}</button>
        </div>
        <span>数.xlsx - Excel</span>
        <div class="win">
          <button aria-label="功能区显示选项">${icons.ribbonOpt}</button>
          <button aria-label="最小化">${icons.min}</button>
          <button aria-label="最大化">${icons.max}</button>
          <button aria-label="关闭">${icons.close}</button>
        </div>
      </header>
      <nav class="tabs">
        <button class="file">文件</button><button class="on">开始</button>
        ${TABS.map((t) => html`<button>${t}</button>`)}
        <button class="tell">${icons.bulb}告诉我您想要做什么...</button>
        <button class="login">登录</button>
        <button class="share">${icons.share}共享</button>
      </nav>
      ${this.ribbon()}
      <div class="fx">
        <div class="name box"><input aria-label="名称框" value="D7">${tri("M0 0h8L4 4z", 8, 4)}</div>
        <span class="dots">${icons.dots}</span>
        <div class="fxb box">
          <button aria-label="取消">${icons.cancel}</button><button aria-label="输入">${icons.check}</button>
          <button aria-label="插入函数"><i>f<small>x</small></i></button>
        </div>
        <div class="formula box"><textarea aria-label="编辑栏" .value=${'=TEXT(C7,"0.00%")'}></textarea><button aria-label="折叠编辑栏">${icons.chevronS}</button></div>
      </div>
      <main class="main">
        ${this.grid()}
        <div class="vs">
          <button class="sb" aria-label="向上滚动">${tri("M0 4h8L4 0z", 8, 4)}</button>
          <div class="vthumb"></div>
          <button class="sb" aria-label="向下滚动">${tri("M0 0h8L4 4z", 8, 4)}</button>
        </div>
      </main>
      <div class="foot">
        <div class="nav">
          <button aria-label="上一张">${tri("M5 0v8L1 4z", 5, 8, "#bdbdbd")}</button>
          <button aria-label="下一张">${tri("M0 0v8l4-4z", 5, 8, "#bdbdbd")}</button>
        </div>
        <button class="sheet-tab">Sheet1</button>
        <button class="add" aria-label="新工作表">${icons.plus}</button>
        <span class="fd">${icons.dots}</span>
        <div class="hs">
          <button class="sb" aria-label="向左滚动">${tri("M4 0v8L0 4z", 4, 8)}</button>
          <div class="hthumb"></div>
          <button class="sb" aria-label="向右滚动">${tri("M0 0v8l4-4z", 4, 8)}</button>
        </div>
      </div>
      <footer class="status">
        <span>就绪</span><button class="macro" aria-label="录制宏">${icons.macro}</button>
        <button class="v sel" aria-label="普通">${icons.viewGrid}</button>
        <button class="v" aria-label="页面布局">${icons.viewPage}</button>
        <button class="v" aria-label="分页预览">${icons.viewBreak}</button>
        <label class="zoom"><b></b><input type="range" aria-label="显示比例" min="0" max="200" value="96">${icon(8, 8, svg`<path d="M4 0v8M0 4h8" stroke="#6a6a6a" stroke-width="2"/>`)}</label>
        <button class="pc">100%</button>
      </footer>
      <div class="mark">${icons.hex}<div><p>Office教程网</p><a href="#">www.office26.com</a></div></div>
    `;
  }
}
